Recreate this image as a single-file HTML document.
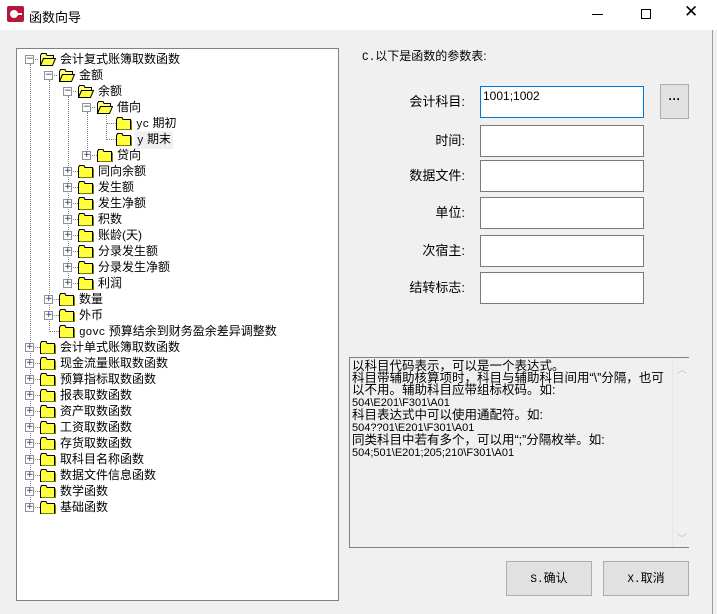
<!DOCTYPE html>
<html><head><meta charset="utf-8"><style>
*{margin:0;padding:0;box-sizing:border-box}
body{width:717px;height:614px;background:#f0f0f0;position:relative;overflow:hidden;font-family:"Liberation Sans","Noto Sans CJK SC","WenQuanYi Zen Hei",sans-serif;font-size:12px;color:#000}
.a{position:absolute}
.title{left:0;top:0;width:717px;height:30px;background:#fff}
.tree{left:16px;top:48px;width:323px;height:553px;background:#fff;border:1px solid #828282}
.bx{position:absolute;width:9px;height:9px;border:1px solid #919191;background:#fff;font-size:9px;line-height:7px;text-align:center;color:#1d2d7a;font-family:"DejaVu Sans",sans-serif}
.vl{position:absolute;border-left:1px dotted #808080;width:0}
.hl{position:absolute;border-top:1px dotted #808080;height:0}
.fd{position:absolute;width:16px;height:13px}
.lb{position:absolute;font-size:12px;line-height:16px;white-space:nowrap}
.m{font-family:"Liberation Mono",monospace;font-size:11px}
.in{position:absolute;left:480px;width:164px;height:32px;background:#fff;border:1px solid #7a7a7a}
.lab{position:absolute;right:252px;font-size:13px;line-height:16px}
.btn{position:absolute;background:#e1e1e1;border:1px solid #adadad;text-align:center;font-size:12px}
.n{font-size:11px;font-family:"Liberation Sans Narrow","Liberation Sans",sans-serif}
</style></head><body>
<svg width="0" height="0" style="position:absolute"><defs>
<symbol id="f" viewBox="0 0 16 13"><path d="M0.5 2.5 L1.5 0.5 H6 L7 2.5 H14.5 V12.5 H0.5 Z" fill="#ffff40" stroke="#000"/><path d="M1.5 12.5 H15.5 V3.5" fill="none" stroke="#808000"/></symbol>
<symbol id="o" viewBox="0 0 16 13"><path d="M0.5 2.5 L1.5 0.5 H6 L7 2.5 H13.5 V5.5 H3.5 L0.5 12.5 Z" fill="#ffff80" stroke="#000"/><path d="M0.5 12.5 L3.5 5.5 H15.5 L12.5 12.5 Z" fill="#ffff40" stroke="#000"/></symbol>
</defs></svg>
<div class="a title"></div>
<div class="a" style="left:7px;top:6px;width:17px;height:16px;background:#b4183c;border-radius:2px"><div class="a" style="left:3px;top:4px;width:8px;height:8px;border-radius:50%;background:#fff"></div><div class="a" style="left:10px;top:7px;width:5px;height:2px;background:#fff"></div></div>
<div class="a" style="left:29px;top:7px;font-size:13px">函数向导</div>
<div class="a" style="left:592px;top:14px;width:11px;height:1px;background:#000"></div>
<div class="a" style="left:641px;top:9px;width:10px;height:10px;border:1px solid #000"></div>
<div class="a" style="left:684px;top:2px;font-size:17px;font-family:'DejaVu Sans',sans-serif;font-weight:200">✕</div>
<div class="a" style="left:712px;top:30px;width:1px;height:584px;background:#a0a0a0"></div>

<div class="a tree">
<div class="vl" style="left:13px;top:15px;height:444px"></div>
<div class="vl" style="left:32px;top:31px;height:252px"></div>
<div class="vl" style="left:51px;top:47px;height:188px"></div>
<div class="vl" style="left:70px;top:63px;height:44px"></div>
<div class="vl" style="left:89px;top:63px;height:28px"></div>
</div>
<div class="a" style="left:17px;top:49px;width:320px;height:550px">
<div class="hl" style="left:13px;top:10px;width:8px"></div><div class="bx" style="left:8px;top:6px">−</div><svg class="fd" style="left:23px;top:4px"><use href="#o"/></svg><div class="lb" style="left:43px;top:2px">会计复式账簿取数函数</div>
<div class="hl" style="left:32px;top:26px;width:8px"></div><div class="bx" style="left:27px;top:22px">−</div><svg class="fd" style="left:42px;top:20px"><use href="#o"/></svg><div class="lb" style="left:62px;top:18px">金额</div>
<div class="hl" style="left:51px;top:42px;width:8px"></div><div class="bx" style="left:46px;top:38px">−</div><svg class="fd" style="left:61px;top:36px"><use href="#o"/></svg><div class="lb" style="left:81px;top:34px">余额</div>
<div class="hl" style="left:70px;top:58px;width:8px"></div><div class="bx" style="left:65px;top:54px">−</div><svg class="fd" style="left:80px;top:52px"><use href="#o"/></svg><div class="lb" style="left:100px;top:50px">借向</div>
<div class="hl" style="left:89px;top:74px;width:10px"></div><svg class="fd" style="left:99px;top:68px"><use href="#f"/></svg><div class="lb" style="left:119px;top:66px"><span class="m">yc</span> 期初</div>
<div class="hl" style="left:89px;top:90px;width:10px"></div><svg class="fd" style="left:99px;top:84px"><use href="#f"/></svg><div class="lb" style="left:118px;top:82px;background:#f0f0f0;padding:0 2px"><span class="m">y</span> 期末</div>
<div class="hl" style="left:70px;top:106px;width:10px"></div><div class="bx" style="left:65px;top:102px">+</div><svg class="fd" style="left:80px;top:100px"><use href="#f"/></svg><div class="lb" style="left:100px;top:98px">贷向</div>
<div class="hl" style="left:51px;top:122px;width:10px"></div><div class="bx" style="left:46px;top:118px">+</div><svg class="fd" style="left:61px;top:116px"><use href="#f"/></svg><div class="lb" style="left:81px;top:114px">同向余额</div>
<div class="hl" style="left:51px;top:138px;width:10px"></div><div class="bx" style="left:46px;top:134px">+</div><svg class="fd" style="left:61px;top:132px"><use href="#f"/></svg><div class="lb" style="left:81px;top:130px">发生额</div>
<div class="hl" style="left:51px;top:154px;width:10px"></div><div class="bx" style="left:46px;top:150px">+</div><svg class="fd" style="left:61px;top:148px"><use href="#f"/></svg><div class="lb" style="left:81px;top:146px">发生净额</div>
<div class="hl" style="left:51px;top:170px;width:10px"></div><div class="bx" style="left:46px;top:166px">+</div><svg class="fd" style="left:61px;top:164px"><use href="#f"/></svg><div class="lb" style="left:81px;top:162px">积数</div>
<div class="hl" style="left:51px;top:186px;width:10px"></div><div class="bx" style="left:46px;top:182px">+</div><svg class="fd" style="left:61px;top:180px"><use href="#f"/></svg><div class="lb" style="left:81px;top:178px">账龄(天)</div>
<div class="hl" style="left:51px;top:202px;width:10px"></div><div class="bx" style="left:46px;top:198px">+</div><svg class="fd" style="left:61px;top:196px"><use href="#f"/></svg><div class="lb" style="left:81px;top:194px">分录发生额</div>
<div class="hl" style="left:51px;top:218px;width:10px"></div><div class="bx" style="left:46px;top:214px">+</div><svg class="fd" style="left:61px;top:212px"><use href="#f"/></svg><div class="lb" style="left:81px;top:210px">分录发生净额</div>
<div class="hl" style="left:51px;top:234px;width:10px"></div><div class="bx" style="left:46px;top:230px">+</div><svg class="fd" style="left:61px;top:228px"><use href="#f"/></svg><div class="lb" style="left:81px;top:226px">利润</div>
<div class="hl" style="left:32px;top:250px;width:10px"></div><div class="bx" style="left:27px;top:246px">+</div><svg class="fd" style="left:42px;top:244px"><use href="#f"/></svg><div class="lb" style="left:62px;top:242px">数量</div>
<div class="hl" style="left:32px;top:266px;width:10px"></div><div class="bx" style="left:27px;top:262px">+</div><svg class="fd" style="left:42px;top:260px"><use href="#f"/></svg><div class="lb" style="left:62px;top:258px">外币</div>
<div class="hl" style="left:32px;top:282px;width:10px"></div><svg class="fd" style="left:42px;top:276px"><use href="#f"/></svg><div class="lb" style="left:62px;top:274px"><span class="m">govc</span> 预算结余到财务盈余差异调整数</div>
<div class="hl" style="left:13px;top:298px;width:10px"></div><div class="bx" style="left:8px;top:294px">+</div><svg class="fd" style="left:23px;top:292px"><use href="#f"/></svg><div class="lb" style="left:43px;top:290px">会计单式账簿取数函数</div>
<div class="hl" style="left:13px;top:314px;width:10px"></div><div class="bx" style="left:8px;top:310px">+</div><svg class="fd" style="left:23px;top:308px"><use href="#f"/></svg><div class="lb" style="left:43px;top:306px">现金流量账取数函数</div>
<div class="hl" style="left:13px;top:330px;width:10px"></div><div class="bx" style="left:8px;top:326px">+</div><svg class="fd" style="left:23px;top:324px"><use href="#f"/></svg><div class="lb" style="left:43px;top:322px">预算指标取数函数</div>
<div class="hl" style="left:13px;top:346px;width:10px"></div><div class="bx" style="left:8px;top:342px">+</div><svg class="fd" style="left:23px;top:340px"><use href="#f"/></svg><div class="lb" style="left:43px;top:338px">报表取数函数</div>
<div class="hl" style="left:13px;top:362px;width:10px"></div><div class="bx" style="left:8px;top:358px">+</div><svg class="fd" style="left:23px;top:356px"><use href="#f"/></svg><div class="lb" style="left:43px;top:354px">资产取数函数</div>
<div class="hl" style="left:13px;top:378px;width:10px"></div><div class="bx" style="left:8px;top:374px">+</div><svg class="fd" style="left:23px;top:372px"><use href="#f"/></svg><div class="lb" style="left:43px;top:370px">工资取数函数</div>
<div class="hl" style="left:13px;top:394px;width:10px"></div><div class="bx" style="left:8px;top:390px">+</div><svg class="fd" style="left:23px;top:388px"><use href="#f"/></svg><div class="lb" style="left:43px;top:386px">存货取数函数</div>
<div class="hl" style="left:13px;top:410px;width:10px"></div><div class="bx" style="left:8px;top:406px">+</div><svg class="fd" style="left:23px;top:404px"><use href="#f"/></svg><div class="lb" style="left:43px;top:402px">取科目名称函数</div>
<div class="hl" style="left:13px;top:426px;width:10px"></div><div class="bx" style="left:8px;top:422px">+</div><svg class="fd" style="left:23px;top:420px"><use href="#f"/></svg><div class="lb" style="left:43px;top:418px">数据文件信息函数</div>
<div class="hl" style="left:13px;top:442px;width:10px"></div><div class="bx" style="left:8px;top:438px">+</div><svg class="fd" style="left:23px;top:436px"><use href="#f"/></svg><div class="lb" style="left:43px;top:434px">数学函数</div>
<div class="hl" style="left:13px;top:458px;width:10px"></div><div class="bx" style="left:8px;top:454px">+</div><svg class="fd" style="left:23px;top:452px"><use href="#f"/></svg><div class="lb" style="left:43px;top:450px">基础函数</div>
</div>

<div class="a" style="left:362px;top:47px;font-size:12px"><span class="m">C.</span>以下是函数的参数表:</div>
<div class="lab" style="top:94px">会计科目:</div>
<div class="lab" style="top:133px">时间:</div>
<div class="lab" style="top:168px">数据文件:</div>
<div class="lab" style="top:205px">单位:</div>
<div class="lab" style="top:243px">次宿主:</div>
<div class="lab" style="top:280px">结转标志:</div>
<div class="in" style="top:86px;border-color:#0078d7;padding:2px 2px;font-size:12px;line-height:14px">1001;1002</div>
<div class="in" style="top:125px"></div>
<div class="in" style="top:160px"></div>
<div class="in" style="top:197px"></div>
<div class="in" style="top:235px"></div>
<div class="in" style="top:272px"></div>
<div class="btn" style="left:660px;top:84px;width:29px;height:35px;line-height:28px;font-weight:bold">···</div>

<div class="a" style="left:349px;top:357px;width:340px;height:191px;border:1px solid #828282;background:#f0f0f0">
<div class="a" style="left:2px;top:2px;width:318px;font-size:12.5px;line-height:12px">以科目代码表示，可以是一个表达式。<br>科目带辅助核算项时，科目与辅助科目间用“\”分隔，也可<br>以不用。辅助科目应带组标权码。如:<br><span class="n">504\E201\F301\A01</span><br>科目表达式中可以使用通配符。如:<br><span class="n">504??01\E201\F301\A01</span><br>同类科目中若有多个，可以用“;”分隔枚举。如:<br><span class="n">504;501\E201;205;210\F301\A01</span></div>
<div class="a" style="left:322px;top:0;width:17px;height:189px;background:#f0f0f0;border-left:1px solid #e6e6e6"><div class="a" style="left:4px;top:3px;color:#c0c0c0;font-size:10px">︿</div><div class="a" style="left:4px;top:172px;color:#c0c0c0;font-size:10px">﹀</div></div>
</div>
<div class="btn" style="left:506px;top:561px;width:86px;height:35px;line-height:33px"><span class="m">S.</span>确认</div>
<div class="btn" style="left:603px;top:561px;width:86px;height:35px;line-height:33px"><span class="m">X.</span>取消</div>
</body></html>
